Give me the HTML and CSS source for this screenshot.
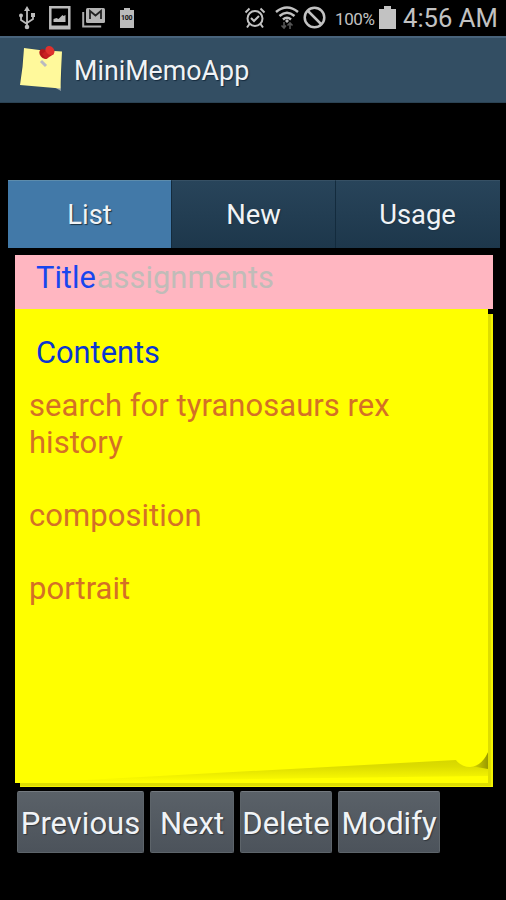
FILE: index.html
```html
<!DOCTYPE html>
<html lang="en">
<head>
<meta charset="utf-8">
<title>MiniMemoApp</title>
<link rel="stylesheet" href="styles.css">
</head>
<body>
<div class="status">
  <svg class="usb" width="18" height="24" viewBox="0 0 18 24"><path d="M9 4v17M3 10v4l6 4M15 9v4l-6 4" fill="none" stroke="#bbb" stroke-width="1.800"/><path d="M9 0l3 5H6zM13 7h4v4h-4z" fill="#bbb"/><circle cx="3" cy="9.500" r="2" fill="#bbb"/><circle cx="9" cy="21" r="2.300" fill="#bbb"/></svg>
  <svg class="photo" width="22" height="24" viewBox="0 0 22 24"><path d="M1.300 1.300h19v21h-19z" fill="none" stroke="#bbb" stroke-width="2.500"/><path d="M2 19.500h18V22H2zM4.500 16v-3l3-1 2 1 4-4 1 1 2-1v7z" fill="#bbb"/></svg>
  <svg class="mail" width="24" height="22" viewBox="0 0 24 22"><path d="M1.200 5v14.500h18" fill="none" stroke="#aaa" stroke-width="2"/><rect x="4" y="1" width="19" height="15" rx="1.500" fill="#b4b4b4"/><path d="M8 12V4l5.500 4.500L19 4v8" fill="none" stroke="#222" stroke-width="1.800"/></svg>
  <span class="full">
    <svg width="14" height="20" viewBox="0 0 14 20"><path d="M4 0h6v2h4v18H0V2h4z" fill="#bbb"/></svg>
    <b>100</b>
  </span>
  <svg class="alarm" width="22" height="22" viewBox="0 0 22 22"><g fill="none" stroke="#c2c2c2" stroke-width="2"><circle cx="11" cy="11.500" r="7.500"/><path d="M1.500 5.500l4-4M16.500 1.500l4 4M5.500 17l-2.500 3.500M16.500 17l2.500 3.500M7 11l3 3 5-5"/></g></svg>
  <svg class="wifi" width="24" height="24" viewBox="0 0 24 24"><g fill="none" stroke="#c2c2c2" stroke-width="2.500"><path d="M1 6Q12-3 23 6M4.500 10Q12 3.500 19.500 10M8 13.500Q12 10 16 13.500"/></g><path d="M12 13l2 2-2 2-2-2z" fill="#bbb"/><path d="M9 16v6M6.500 19.500L9 22l2-2.500M15 23v-6M12.500 19.500L15 17l2.500 2.500" fill="none" stroke="#555" stroke-width="1.600"/></svg>
  <svg class="block" width="23" height="23" viewBox="0 0 23 23"><g fill="none" stroke="#c2c2c2" stroke-width="2.500"><circle cx="11.500" cy="11.500" r="9.800"/><path d="M4.500 4.500l14 14"/></g></svg>
  <span class="percent">100%</span>
  <svg class="battery" width="17" height="23" viewBox="0 0 17 23"><path d="M5 0h7v3h5v20H0V3h5z" fill="#c2c2c2"/></svg>
  <span class="clock">4:56 AM</span>
</div>
<header class="bar">
  <svg class="logo" width="46" height="50" viewBox="0 0 46 50"><path d="M5 3L43 7l-1 38-5-2-36-4z" fill="#1c3149" opacity=".7"/><path d="M41 36l1 10-7-4z" fill="#9ba6a8"/><path d="M5 3Q23 6 43 6.500Q42 25 41.500 43.500L1 40Q4 22 5 3z" fill="#fff99b"/><path d="M22 16l5 5" stroke="#b9bac0" stroke-width="3"/><ellipse cx="25" cy="9" rx="5.500" ry="4" transform="rotate(50 25 9)" fill="#b5161a"/><path d="M23 9l7-6 5 6-8 5z" fill="#c81f21"/><ellipse cx="31" cy="5.500" rx="5" ry="4" transform="rotate(45 31 5.500)" fill="#df302d"/></svg>
  <span class="name">MiniMemoApp</span>
</header>
<nav class="tabs">
  <span class="tab active">List</span><span class="tab">New</span><span class="tab">Usage</span>
</nav>
<main class="memo">
  <div class="title"><span class="label">Title</span><span class="value">assignments</span></div>
  <div class="note">
    <div class="paper">
      <h2>Contents</h2>
      <div class="text">search for tyranosaurs rex<br>history<br><br>composition<br><br>portrait</div>
    </div>
    <svg class="curl" width="478" height="45" viewBox="0 0 478 45"><defs><linearGradient id="fold" x1="0" y1="0" x2="0" y2="1"><stop offset="0" stop-color="#cccc00"/><stop offset=".5" stop-color="#dddd00"/><stop offset="1" stop-color="#ffff00"/></linearGradient><linearGradient id="edge" x1="0" x2="1"><stop offset="0" stop-color="#dddd00"/><stop offset="1" stop-color="#999900"/></linearGradient></defs><path d="M35 40L441 18Q461 16 473 9V34Q440 34 35 40z" fill="url(#fold)"/><path d="M456 24Q468 20 473 10V27z" fill="url(#edge)"/><path d="M440 17Q446 25 455 25Q467 24 473 10V5H440z" fill="#ff0"/></svg>
  </div>
</main>
<footer class="actions">
  <span class="button previous">Previous</span><span class="button next">Next</span><span class="button delete">Delete</span><span class="button modify">Modify</span>
</footer>
</body>
</html>
```
FILE: styles.css
```css
*, *::after { box-sizing: border-box; }
body { margin: 0; width: 506px; height: 900px; overflow: hidden; background: #000; color: #f0f3f6; font-family: Roboto, sans-serif; }
svg { display: block; flex: none; }
.status { height: 36px; display: flex; align-items: flex-start; color: #c2c2c2; white-space: nowrap; }
.usb { margin: 6px 0 0 18px; }
.photo { margin: 6px 0 0 13px; }
.mail { margin: 7px 0 0 11px; }
.full { position: relative; margin: 8px 0 0 14px; }
.full b { position: absolute; left: 1px; top: 6px; font-size: 7px; line-height: 8px; letter-spacing: -.3px; color: #111; }
.alarm { margin: 7px 0 0 110px; }
.wifi { margin: 6px 0 0 9px; }
.block { margin: 6px 0 0 4px; }
.percent { width: 40px; margin: 8px 0 0 9px; font-size: 17px; line-height: 22px; letter-spacing: -.4px; }
.battery { margin: 6px 0 0 4px; }
.clock { margin: 3px 0 0 7px; font-size: 25.600px; line-height: 30px; }
.bar { height: 67px; display: flex; align-items: flex-start; background: #334e63; border-top: 2px solid #48637b; border-bottom: 1px solid #2b4253; }
.logo { margin: 7px 0 0 19px; }
.name { margin: 16px 0 0 9px; font-size: 26.800px; line-height: 34px; text-shadow: 1px 1px 1px #152a3d; }
.tabs { display: grid; grid-template-columns: 163px 164px 165px; margin: 77px 6px 0 8px; height: 68px; }
.tab { display: flex; align-items: center; justify-content: center; padding-top: 1px; font-size: 27.400px; background: linear-gradient(#28445a, #1d374b); border-top: 1px solid #365064; border-left: 1px solid #132b3d; text-shadow: 1px 1px 1px #1d3344; }
.tab:last-child { padding-right: 1px; }
.tab.active { background: #4279a8; border-top-color: #5d8cac; border-left: 0; }
.memo { width: 478px; margin: 7px 0 0 15px; }
.title { height: 54px; padding: 5px 0 0 21px; background: #ffb6c1; font-size: 30.800px; line-height: 36px; white-space: nowrap; }
.label { color: #1846ee; }
.value { margin-left: 1px; color: #c0bcb8; letter-spacing: .05px; }
.note { position: relative; height: 478px; background: linear-gradient(#dede00, #dede00) 5px 5px / 473px 473px no-repeat; }
.note::after { content: ""; position: absolute; left: 5px; right: 0; top: 5px; height: 473px; border: solid #f2f200; border-width: 0 2px 1px 0; }
.paper { width: 473px; height: 474px; padding: 26px 14px 0; background: #ff0; }
h2 { margin: 0; padding-left: 7px; font-size: 30.800px; line-height: 36px; font-weight: 400; color: #0b36d2; }
.text { margin-top: 17px; font-size: 31px; line-height: 36.600px; letter-spacing: .04px; color: #d47026; white-space: nowrap; }
.curl { position: absolute; left: 0; bottom: 0; }
.actions { display: flex; gap: 6px; margin: 4px 0 0 17px; }
.button { height: 62px; display: flex; align-items: center; justify-content: center; padding-top: 2px; background: linear-gradient(#5a6168, #4c535b); border: 1px solid #5d646a; border-top-color: #747a80; border-radius: 2px; font-size: 31px; text-shadow: 1px 1px 1px #30363c; }
.previous { width: 127px; }
.next { width: 84px; }
.delete { width: 92px; }
.modify { width: 102px; }
```
